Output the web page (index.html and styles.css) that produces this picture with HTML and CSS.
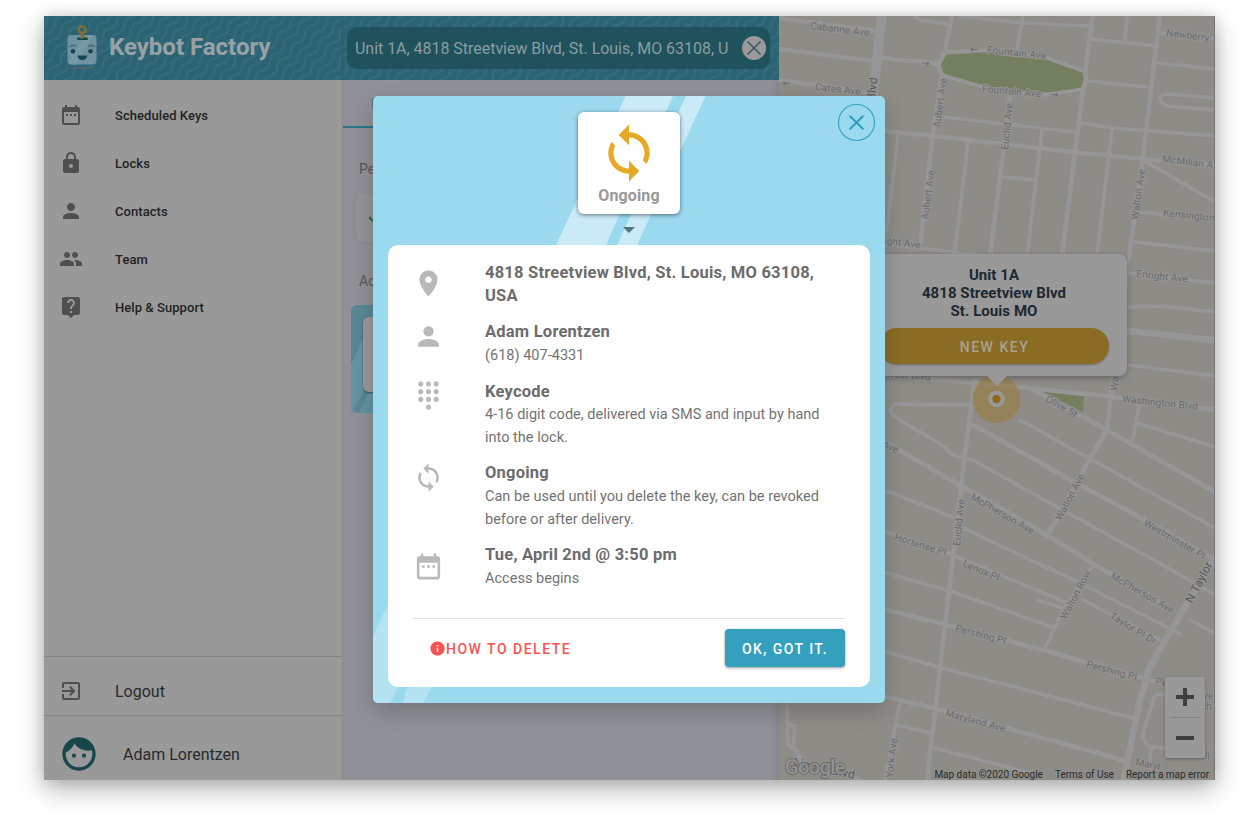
FILE: index.html
```html
<!DOCTYPE html>
<html lang="en">
<head>
<meta charset="utf-8">
<title>Keybot Factory</title>
<link rel="stylesheet" href="styles.css">
</head>
<body>
<svg class="defs" width="0" height="0" aria-hidden="true">
  <symbol id="i-cal" viewBox="0 0 24 24"><path d="M9 11H7v2h2v-2zm4 0h-2v2h2v-2zm4 0h-2v2h2v-2zm2-7h-1V2h-2v2H8V2H6v2H5c-1.11 0-1.99.9-1.99 2L3 20c0 1.100.89 2 2 2h14c1.100 0 2-.9 2-2V6c0-1.100-.9-2-2-2zm0 16H5V9h14v11z"/></symbol>
  <symbol id="i-lock" viewBox="0 0 24 24"><path d="M18 8h-1V6c0-2.760-2.240-5-5-5S7 3.240 7 6v2H6c-1.100 0-2 .9-2 2v10c0 1.100.9 2 2 2h12c1.100 0 2-.9 2-2V10c0-1.100-.9-2-2-2zm-6 9c-1.100 0-2-.9-2-2s.9-2 2-2 2 .9 2 2-.9 2-2 2zm3.100-9H8.900V6c0-1.710 1.390-3.100 3.100-3.100s3.100 1.390 3.100 3.100v2z"/></symbol>
  <symbol id="i-person" viewBox="0 0 24 24"><path d="M12 12c2.210 0 4-1.790 4-4s-1.790-4-4-4-4 1.790-4 4 1.790 4 4 4zm0 2c-2.670 0-8 1.340-8 4v2h16v-2c0-2.660-5.330-4-8-4z"/></symbol>
  <symbol id="i-team" viewBox="0 0 24 24"><path d="M16 11c1.660 0 2.990-1.340 2.990-3S17.660 5 16 5s-3 1.340-3 3 1.340 3 3 3zm-8 0c1.660 0 2.990-1.340 2.990-3S9.660 5 8 5 5 6.340 5 8s1.340 3 3 3zm0 2c-2.330 0-7 1.170-7 3.500V19h14v-2.500C15 14.170 10.330 13 8 13zm8 0c-.29 0-.62.02-.97.05 1.160.84 1.970 1.970 1.970 3.450V19h6v-2.500c0-2.330-4.670-3.500-7-3.500z"/></symbol>
  <symbol id="i-help" viewBox="0 0 24 24"><path d="M19 2H5c-1.110 0-2 .9-2 2v14c0 1.100.89 2 2 2h4l3 3 3-3h4c1.100 0 2-.9 2-2V4c0-1.100-.9-2-2-2zm-6 16h-2v-2h2v2zm2.070-7.750l-.9.92C13.450 11.900 13 12.500 13 14h-2v-.5c0-1.100.45-2.100 1.170-2.830l1.240-1.260c.37-.36.59-.86.59-1.410 0-1.100-.9-2-2-2s-2 .9-2 2H8c0-2.210 1.790-4 4-4s4 1.790 4 4c0 .88-.36 1.680-.93 2.250z"/></symbol>
  <symbol id="i-exit" viewBox="0 0 24 24"><path d="M10.090 15.590L11.500 17l5-5-5-5-1.410 1.410L12.670 11H3v2h9.670l-2.580 2.590zM19 3H5c-1.110 0-2 .9-2 2v4h2V5h14v14H5v-4H3v4c0 1.100.89 2 2 2h14c1.100 0 2-.9 2-2V5c0-1.100-.9-2-2-2z"/></symbol>
  <symbol id="i-pin" viewBox="0 0 24 24"><path d="M12 2C8.130 2 5 5.130 5 9c0 5.250 7 13 7 13s7-7.750 7-13c0-3.870-3.130-7-7-7zm0 9.500c-1.380 0-2.500-1.120-2.500-2.500s1.120-2.500 2.500-2.500 2.500 1.120 2.500 2.500-1.120 2.500-2.500 2.500z"/></symbol>
  <symbol id="i-sync" viewBox="0 0 24 24"><path d="M12 4V1L8 5l4 4V6c3.310 0 6 2.690 6 6 0 1.010-.25 1.970-.7 2.800l1.460 1.460C19.540 15.030 20 13.570 20 12c0-4.420-3.580-8-8-8zm0 14c-3.310 0-6-2.690-6-6 0-1.010.25-1.970.7-2.800L5.240 7.740C4.460 8.970 4 10.430 4 12c0 4.420 3.580 8 8 8v3l4-4-4-4v3z"/></symbol>
  <symbol id="i-pad" viewBox="0 0 24 24"><path d="M12 19c-1.100 0-2 .9-2 2s.9 2 2 2 2-.9 2-2-.9-2-2-2zM6 1c-1.100 0-2 .9-2 2s.9 2 2 2 2-.9 2-2-.9-2-2-2zm0 6c-1.100 0-2 .9-2 2s.9 2 2 2 2-.9 2-2-.9-2-2-2zm0 6c-1.100 0-2 .9-2 2s.9 2 2 2 2-.9 2-2-.9-2-2-2zm12-8c1.100 0 2-.9 2-2s-.9-2-2-2-2 .9-2 2 .9 2 2 2zm-6 8c-1.100 0-2 .9-2 2s.9 2 2 2 2-.9 2-2-.9-2-2-2zm6 0c-1.100 0-2 .9-2 2s.9 2 2 2 2-.9 2-2-.9-2-2-2zm0-6c-1.100 0-2 .9-2 2s.9 2 2 2 2-.9 2-2-.9-2-2-2zm-6 0c-1.100 0-2 .9-2 2s.9 2 2 2 2-.9 2-2-.9-2-2-2zm0-6c-1.100 0-2 .9-2 2s.9 2 2 2 2-.9 2-2-.9-2-2-2z"/></symbol>
  <symbol id="i-info" viewBox="0 0 24 24"><path d="M12 2C6.480 2 2 6.480 2 12s4.480 10 10 10 10-4.480 10-10S17.520 2 12 2zm1 15h-2v-6h2v6zm0-8h-2V7h2v2z"/></symbol>
  <symbol id="i-face" viewBox="0 0 24 24"><path fill-rule="evenodd" d="M9 11.750a1.250 1.250 0 1 0 0 2.500 1.250 1.250 0 0 0 0-2.500zm6 0a1.250 1.250 0 1 0 0 2.500 1.250 1.250 0 0 0 0-2.500zM12 2C6.480 2 2 6.480 2 12s4.480 10 10 10 10-4.480 10-10S17.520 2 12 2zm0 18c-4.410 0-8-3.590-8-8 0-.29.02-.58.05-.86 2.360-1.050 4.230-2.980 5.210-5.370C11.070 8.330 14.050 10 17.420 10c.78 0 1.530-.09 2.250-.26.21.71.33 1.470.33 2.260 0 4.410-3.590 8-8 8z"/></symbol>
</svg>

<div class="window">
  <header class="topbar">
    <svg class="waves" width="735" height="64">
      <defs>
        <pattern id="wave" width="22" height="9" patternUnits="userSpaceOnUse" patternTransform="rotate(-50)">
          <path d="M0 4.500C4 1.500 7 1.500 11 4.500S18 7.500 22 4.500" fill="none" stroke="#346d7c" stroke-width="1.700"/>
        </pattern>
      </defs>
      <rect width="735" height="64" fill="url(#wave)"/>
    </svg>
    <div class="brand">
      <svg class="robot" width="32" height="46" viewBox="0 0 32 46">
        <ellipse cx="16" cy="43" rx="11" ry="1.200" fill="#4c6470"/>
        <rect x="1.500" y="10" width="29" height="29.500" rx="4" fill="#6e929e"/>
        <path d="M20 10h7L10 39.500H5.500A4 4 0 0 1 2 37z" fill="#7799a4"/>
        <rect x="11" y="12.500" width="11" height="2.400" rx="1.200" fill="#164650"/>
        <circle cx="16" cy="4.800" r="3.300" fill="none" stroke="#8b6f25" stroke-width="2.200"/>
        <path d="M16 8v6M16 11.500h3" stroke="#8b6f25" stroke-width="2"/>
        <path d="M3.500 22q3.500-3 7-.5M22 21.500q3.500-2.500 7 .5" fill="none" stroke="#426f7b" stroke-width="1.500"/>
        <circle cx="7" cy="26.200" r="2.300" fill="#164650"/><circle cx="24.500" cy="26.200" r="2.300" fill="#164650"/>
        <path d="M11.500 30.500h9.500a4.750 4.500 0 0 1-9.500 0z" fill="#164650"/>
      </svg>
      <span class="brand-name">Keybot Factory</span>
    </div>
    <div class="search-wrap">
      <div class="search">
        <span class="search-text">Unit 1A, 4818 Streetview Blvd, St. Louis, MO 63108, U</span>
        <svg width="24" height="24" viewBox="0 0 24 24"><circle cx="12" cy="12" r="12" fill="#999"/><path d="M5.500 5.500l13 13M18.500 5.500l-13 13" stroke="#3a5a62" stroke-width="1.600"/></svg>
      </div>
    </div>
  </header>

  <nav class="sidebar">
    <ul class="menu">
      <li><svg class="ic"><use href="#i-cal"/></svg>Scheduled Keys</li>
      <li><svg class="ic"><use href="#i-lock"/></svg>Locks</li>
      <li><svg class="ic"><use href="#i-person"/></svg>Contacts</li>
      <li><svg class="ic"><use href="#i-team"/></svg>Team</li>
      <li><svg class="ic"><use href="#i-help"/></svg>Help &amp; Support</li>
    </ul>
    <div class="logout"><svg class="ic"><use href="#i-exit"/></svg><span>Logout</span></div>
    <div class="user"><svg class="face"><use href="#i-face"/></svg>Adam Lorentzen</div>
  </nav>

  <main class="panel">
    <div class="tab">Keys</div>
    <div class="group">Pending</div>
    <div class="pending"><svg width="14" height="11" viewBox="0 0 14 11"><path d="M0 4l5 5 8-8" fill="none" stroke="#2b6b3d" stroke-width="2"/></svg></div>
    <div class="group second">Active</div>
    <div class="active-key">
      <svg class="key-stripes" width="60" height="108"><path d="M0 60L22 12V70L0 108z" fill="#6594a2"/><path d="M8 108L30 62v46z" fill="#6594a2"/></svg>
      <div class="key-card"></div>
    </div>
  </main>

  <section class="map">
    <svg class="map-art" viewBox="779 16 436 764" width="436" height="764">
      <g class="park">
        <path d="M945 55L993 52 1050 60 1083 72 1084 80 1082 88 1047 92 987 88 943 75 941 65z"/>
        <path d="M1043 392L1084 396.500 1083 412z"/>
      </g>
      <g class="roads">
        <path class="w9" d="M882 14L873 97"/>
        <path class="w5" d="M779 18L874 31M779 49L873 61M880 57L900 60 938 63M779 80L872 93M885 131L933 136 1013 145 1073 152 1143 159 1215 165M952 14L945 52 938 65 942 75 933 133 920 247M1093 14L1085 72 1086 80 1083 90 1062 256M1160 14L1143 157 1130 250 1113 377 1107 430 1092 455 1048 535M1010 98L990 256"/>
        <path d="M915 17L920 20 948 24M960 16L1023 23 1090 26M945 52L987 50 1047 58 1086 72M1083 89L1047 95 997 91 942 75M1023 16L1017 50M1127 16L1125 40M1090 39L1157 46M1160 33L1215 39M1158 63L1215 69M1088 81L1147 87M1215 98L1167 94Q1160 94 1160 99 1162 105 1168 106L1215 110M943 117L1075 132M1082 123L1113 128 1215 136M1042 130L1027 256M1112 128L1097 256M968 143L955 250M898 135L887 230M1003 177L1033 180M1143 160L1215 202M1140 212L1215 220M1135 242L1215 251M885 244L1128 273 1215 283M1128 307L1163 306 1215 312"/>
        <path class="w7" d="M1128 331L1215 340"/>
        <path d="M1128 365L1215 376M970 405L895 404Q888 408 892 414L903 422 937 442 953 455 973 460 1057 507 1130 547 1195 583 1215 595M1020 420L1215 528M1140 400L1133 440M1137 423L1215 447M1095 452L1092 455M887 491L953 517M963 528L1080 583 1180 634M887 532L953 555 1067 603M887 573L953 592 1055 628M1083 600L1160 640M1037 600L1063 608M887 652L942 668 1133 718M897 725L932 733M935 748L1030 773M900 702L885 780M1093 565L1063 610 1045 648M1190 620L1215 633M1167 694L1155 695 1143 733Q1144 746 1152 747L1165 748M1152 747L1149 765M787 705L788 745Q800 750 802 765L862 780M788 724L795 726 793 748"/>
        <path class="w5" d="M885 375L1020 387 1107 396 1215 410M1030 388L1107 430 1215 492M973 425L1080 485 1145 520 1215 560M975 380L968 430 962 480 948 600 927 780M887 443L963 487 1047 535 1095 565 1173 610M887 610L947 625 1043 650 1157 682M887 697L933 708 1123 760"/>
        <path class="w7" d="M1215 558L1183 610 1150 667 1140 700 1123 782"/>
      </g>
      <g class="labels">
        <text transform="translate(810 29) rotate(7)">Cabanne Ave</text>
        <text transform="translate(815 90) rotate(6)">Cates Ave</text>
        <text class="big" transform="translate(875 101) rotate(-84)">Blvd</text>
        <text transform="translate(987 53) rotate(6)">Fountain Ave</text>
        <text transform="translate(982 92) rotate(5)">Fountain Ave</text>
        <text transform="translate(940 128) rotate(-82)">Aubert Ave</text>
        <text transform="translate(928 220) rotate(-82)">Aubert Ave</text>
        <text transform="translate(1008 150) rotate(-84)">Euclid Ave</text>
        <text transform="translate(1138 220) rotate(-82)">Walton Ave</text>
        <text transform="translate(1166 36) rotate(7)">Newberry</text>
        <text transform="translate(1162 162) rotate(7)">McMillan A</text>
        <text transform="translate(1163 216) rotate(6)">Kensington</text>
        <text transform="translate(869 242) rotate(7)">Enright Ave</text>
        <text transform="translate(1136 277) rotate(6)">Enright Ave</text>
        <text transform="translate(853 374) rotate(5)">Lindell West Blvd</text>
        <text transform="translate(1117 391) rotate(-82)">Wal</text>
        <text transform="translate(1122 402) rotate(6)">Washington Blvd</text>
        <text transform="translate(1045 401) rotate(29)">Olive St</text>
        <text transform="translate(850 433) rotate(24)">Westm Ave</text>
        <text transform="translate(970 499) rotate(30)">McPherson Ave</text>
        <text transform="translate(960 546) rotate(-84)">Euclid Ave</text>
        <text transform="translate(1061 521) rotate(-62)">Walton Ave</text>
        <text transform="translate(894 540) rotate(17)">Hortense Pl</text>
        <text transform="translate(962 566) rotate(23)">Lenox Pl</text>
        <text transform="translate(1143 525) rotate(30)">Westminster Pl</text>
        <text transform="translate(1066 620) rotate(-62)">Walton Row</text>
        <text transform="translate(1110 578) rotate(30)">McPherson Ave</text>
        <text class="big" transform="translate(1192 604) rotate(-62)">N Taylor</text>
        <text transform="translate(955 631) rotate(15)">Pershing Pl</text>
        <text transform="translate(1109 618) rotate(31)">Taylor Pl Dr</text>
        <text transform="translate(1086 667) rotate(15)">Pershing Pl</text>
        <text transform="translate(1155 684) rotate(15)">Pe</text>
        <text transform="translate(1203 698) rotate(8)">ve</text>
        <text transform="translate(1201 710)">ch</text>
        <text transform="translate(945 716) rotate(15)">Maryland Ave</text>
        <text transform="translate(893 778) rotate(-84)">York Ave</text>
        <text transform="translate(1135 765) rotate(12)">Maryl</text>
        <text transform="translate(1199 758) rotate(8)">ull</text>
        <text class="big" transform="translate(793 766) rotate(12)">Lindell Blvd</text>
        <text class="arrow" transform="translate(970 53)">←</text>
        <text class="arrow" transform="translate(921 66) rotate(4)">→</text>
        <text class="arrow" transform="translate(1050 98) rotate(-3)">→</text>
        <text class="arrow" transform="translate(782 86) rotate(3)">←</text>
      </g>
      <circle cx="996.500" cy="399" r="24" fill="#957f4b" fill-opacity=".75"/>
      <text class="glogo" x="785" y="774">Google</text>
    </svg>
    <div class="popup">
      <div class="popup-title">Unit 1A<br>4818 Streetview Blvd<br>St. Louis MO</div>
      <div class="newkey">NEW KEY</div>
    </div>
    <svg class="marker" width="26" height="34" viewBox="0 0 26 34"><path d="M2 0h22L13 11z" fill="#999"/><circle cx="12.500" cy="24" r="8.300" fill="#999"/><circle cx="12.500" cy="24" r="4.200" fill="#8b6a1d"/></svg>
    <div class="zoomer"><i class="plus"></i><hr><i class="minus"></i></div>
    <footer class="credits"><span>Map data ©2020 Google</span><span>Terms of Use</span><span>Report a map error</span></footer>
  </section>

  <div class="modal">
    <svg class="modal-stripes" width="512" height="607" viewBox="373 96 512 607">
      <path d="M625.500 96H673L606 245H556z" fill="#c9eaf6"/>
      <path d="M686 96H705.500L637 245H617z" fill="#c9eaf6"/>
      <path d="M388 604L373 636V703H390.500L410 660V590z" fill="#b6e3f2"/>
      <path d="M411 671L403 703H423L440 671z" fill="#b6e3f2"/>
    </svg>
    <svg class="close" width="38" height="38" viewBox="0 0 38 38"><circle cx="19.500" cy="18.500" r="18" fill="none" stroke="#3ba6c2" stroke-width="1.200"/><path d="M13.200 12.200l12.600 12.600M25.800 12.200L13.200 24.800" stroke="#2f9fbd" stroke-width="2" stroke-linecap="round"/></svg>
    <div class="badge"><svg class="sync"><use href="#i-sync"/></svg><span>Ongoing</span></div>
    <div class="caret"></div>
    <div class="card">
      <div class="row"><svg class="ri"><use href="#i-pin"/></svg><div><b>4818 Streetview Blvd, St. Louis, MO 63108,<br>USA</b></div></div>
      <div class="row top"><svg class="ri"><use href="#i-person"/></svg><div><b>Adam Lorentzen</b><p>(618) 407-4331</p></div></div>
      <div class="row top"><svg class="ri"><use href="#i-pad"/></svg><div><b>Keycode</b><p>4-16 digit code, delivered via SMS and input by hand<br>into the lock.</p></div></div>
      <div class="row top"><svg class="ri"><use href="#i-sync"/></svg><div><b>Ongoing</b><p>Can be used until you delete the key, can be revoked<br>before or after delivery.</p></div></div>
      <div class="row"><svg class="ri"><use href="#i-cal"/></svg><div><b>Tue, April 2nd @ 3:50 pm</b><p>Access begins</p></div></div>
      <div class="actions">
        <span class="howto"><svg class="info"><use href="#i-info"/></svg>HOW TO DELETE</span>
        <button class="ok">OK, GOT IT.</button>
      </div>
    </div>
  </div>
</div>
</body>
</html>
```
FILE: styles.css
```css
* { box-sizing: border-box; }
body {
  margin: 0;
  height: 817px;
  padding: 16px 43px 0 44px;
  overflow: hidden;
  background: #fff;
  font-family: Roboto, "Liberation Sans", sans-serif;
}
.defs { position: absolute; }
svg { display: block; flex: none; }

.window {
  position: relative;
  width: 1171px;
  height: 764px;
  display: grid;
  grid-template-columns: 299px 436px 436px;
  grid-template-rows: 64px 700px;
  box-shadow: 0 9px 24px rgba(0, 0, 0, .3), 0 0 12px rgba(0, 0, 0, .12);
}

.topbar {
  position: relative;
  grid-column: 1 / 3;
  display: grid;
  grid-template-columns: 299px 436px;
  background: #2d6474;
}
.waves { position: absolute; inset: 0; }
.brand { position: relative; display: flex; align-items: center; padding: 0 0 2px 22px; gap: 11px; border-right: 1px solid #295c6a; }
.brand-name { font-size: 24px; font-weight: 700; color: #98a2a6; letter-spacing: 0; white-space: nowrap; }
.robot { margin-top: 2px; }
.search-wrap { position: relative; padding: 11px 9px 11px 4px; }
.search {
  height: 42px;
  display: flex;
  align-items: center;
  justify-content: space-between;
  padding: 0 4px 0 8px;
  border-radius: 10px;
  background: rgba(30, 80, 90, .9);
}
.search-text { font-size: 16px; letter-spacing: -.03px; color: #8b9ca1; white-space: nowrap; }

.sidebar { background: #999; display: flex; flex-direction: column; border-right: 1px solid #8a8a8c; }
.menu { list-style: none; margin: 0; padding: 11px 0 0; flex: 1; }
.menu li { height: 48px; display: flex; align-items: center; gap: 32px; padding-left: 15px; font-size: 13px; font-weight: 500; color: #222; letter-spacing: .06px; }
.ic { width: 24px; height: 24px; fill: #4f4f4f; }
.logout { height: 59px; border-top: 1px solid #858585; display: flex; align-items: center; padding: 9px 0 0 15px; gap: 32px; font-size: 16px; color: #2a2a2a; }
.logout span { padding-top: 2px; }
.user { height: 65px; border-top: 1px solid #858585; display: flex; align-items: center; padding: 12px 0 0 15px; gap: 24px; font-size: 16px; color: #2a2a2a; }
.face { width: 40px; height: 40px; fill: #17464b; }

.panel { background: #909196; overflow: hidden; box-shadow: inset -8px 0 8px -8px rgba(0, 0, 0, .15); }
.tab { height: 48px; width: 220px; border-bottom: 2px solid #2b7487; padding: 16px 0 0 28px; font-size: 14px; color: #2b7487; }
.group { height: 66px; padding: 33px 0 0 16px; font-size: 14px; color: #55575a; }
.pending { height: 48px; width: 400px; margin-left: 13px; border-radius: 8px; background: #939498; padding: 19px 0 0 13px; box-shadow: 0 1px 5px rgba(0, 0, 0, .05); }
.group.second { height: 63px; padding-top: 31px; }
.active-key { position: relative; width: 412px; height: 108px; margin-left: 8px; border-radius: 6px; background: #598795; padding: 12px; overflow: hidden; }
.key-stripes { position: absolute; left: 0; top: 0; }
.key-card { position: relative; width: 75px; height: 75px; border-radius: 6px; background: #999; box-shadow: 0 1px 2px rgba(0, 0, 0, .4); }

.map { position: relative; grid-column: 3; grid-row: 1 / 3; overflow: hidden; background: #8e8c87; display: flex; flex-direction: column; justify-content: flex-end; border-right: 1px solid #777; }
.map-art { position: absolute; left: 0; top: 0; }
.park { fill: #737f5e; }
.roads { fill: none; stroke: #969696; stroke-width: 3.6; stroke-linejoin: round; stroke-linecap: round; }
.w5 { stroke-width: 4.6; }
.w7 { stroke-width: 6.5; }
.w9 { stroke-width: 9.5; }
.labels { font-size: 10px; fill: #6c6c6d; stroke: #959492; stroke-width: 2.2; paint-order: stroke; stroke-linejoin: round; letter-spacing: .12px; }
.labels .big { font-size: 12px; fill: #5c5c5c; }
.labels .arrow { font-size: 10px; font-family: "DejaVu Sans", sans-serif; stroke: none; }
.glogo { font-size: 20px; fill: #9c9c9c; fill-opacity: .8; stroke: #686868; stroke-width: 1.6; paint-order: stroke; letter-spacing: -.6px; font-weight: 500; }
.popup {
  position: absolute;
  left: 82px;
  top: 238px;
  width: 266px;
  height: 122px;
  border-radius: 8px;
  background: #999;
  padding: 12px 18px 0;
  box-shadow: 0 2px 6px rgba(0, 0, 0, .3);
  text-align: center;
}
.popup-title { font-size: 15px; line-height: 18px; font-weight: 700; color: #1d2830; letter-spacing: .06px; white-space: nowrap; }
.newkey { margin-top: 8px; height: 36px; line-height: 39px; border-radius: 18px; background: #8b6c25; color: #a8a294; font-size: 14px; font-weight: 500; letter-spacing: 1.5px; text-indent: 1px; box-shadow: 0 1px 2px rgba(0, 0, 0, .3); }
.marker { position: absolute; left: 205px; top: 359px; }
.zoomer { position: absolute; left: 386px; top: 661px; width: 40px; height: 81px; padding: 11px 0 0; background: #999; border-radius: 2px; box-shadow: 0 1px 3px rgba(0, 0, 0, .3); display: flex; flex-direction: column; align-items: center; }
.zoomer i { width: 18px; height: 18px; background: linear-gradient(#3f3f3f, #3f3f3f) center / 18px 4px no-repeat; }
.zoomer .plus { background: linear-gradient(#3f3f3f, #3f3f3f) center / 18px 4px no-repeat, linear-gradient(#3f3f3f, #3f3f3f) center / 4px 18px no-repeat; }
.zoomer hr { width: 30px; height: 1px; margin: 11px 0; border: 0; background: #868686; }
.credits { position: relative; align-self: flex-end; display: flex; gap: 12px; padding: 0 5px 0 2px; font-size: 10px; line-height: 11px; color: #2c2c2c; letter-spacing: -.02px; white-space: nowrap; }

.modal {
  position: absolute;
  left: 329px;
  top: 80px;
  width: 512px;
  height: 607px;
  padding: 16px 15px;
  border-radius: 5px;
  overflow: hidden;
  background: #9ad9ee;
  display: flex;
  flex-direction: column;
  align-items: center;
}
.window::after { content: ""; position: absolute; left: 329px; top: 80px; width: 512px; height: 607px; border-radius: 5px; box-shadow: 0 8px 22px rgba(0, 0, 0, .2); pointer-events: none; }
.modal-stripes { position: absolute; left: 0; top: 0; }
.close { position: absolute; right: 10px; top: 8px; }
.badge { position: relative; width: 102px; height: 102px; border-radius: 6px; background: #fff; box-shadow: 0 1px 4px rgba(0, 0, 0, .5); display: flex; flex-direction: column; align-items: center; padding-top: 10px; font-size: 16px; font-weight: 700; color: #999; }
.badge span { line-height: 20px; margin-top: 2px; letter-spacing: .15px; }
.sync { width: 62px; height: 62px; fill: #e6a925; }
.caret { position: relative; margin-top: 13px; border: 6.5px solid transparent; border-top-color: #51747f; border-bottom: 0; }
.card { position: relative; margin-top: 12px; width: 482px; height: 442px; border-radius: 10px; background: #fff; padding: 15.6px 25px 0; color: #6c6c6c; flex: none; }
.row { display: flex; align-items: center; gap: 41px; margin-bottom: 13.8px; white-space: nowrap; }
.row.top { align-items: flex-start; }
.row.top .ri { margin-top: .6px; }
.ri { width: 31px; height: 31px; fill: #b9b9b9; }
.row b { display: block; font-size: 16.5px; line-height: 23px; font-weight: 700; letter-spacing: .22px; }
.row p { position: relative; top: 1.8px; margin: 0; font-size: 14.5px; line-height: 22.5px; letter-spacing: .02px; color: #737373; }
.actions { margin-top: 29.4px; border-top: 1px solid #dedede; padding-top: 10px; display: flex; justify-content: space-between; align-items: center; }
.howto { display: flex; align-items: center; padding: 2px 0 0 16px; font-size: 14px; font-weight: 500; color: #fa5252; letter-spacing: 1.5px; }
.info { width: 17px; height: 17px; margin-top: -2px; fill: #fa5252; }
.ok { width: 120px; height: 38px; border: 0; border-radius: 4px; background: #35a0bd; color: #fff; font: 500 14px Roboto, sans-serif; letter-spacing: 1.45px; padding: 1px 0 0; box-shadow: 0 1px 3px rgba(0, 0, 0, .4); }
```
